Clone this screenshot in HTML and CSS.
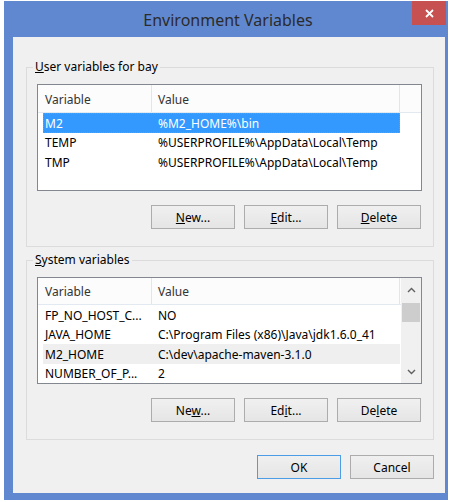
FILE: index.html
```html
<!DOCTYPE html>
<html lang="en">
<head>
<meta charset="utf-8">
<title>Environment Variables</title>
<link rel="stylesheet" href="styles.css">
</head>
<body>
<div class="window">
  <div class="titlebar">
    <span class="title">Environment Variables</span>
    <button class="close" aria-label="Close">
      <svg width="9" height="9" viewBox="0 0 9 9"><path d="M1 1 L8 8 M8 1 L1 8" stroke="#fff" stroke-width="1.8" fill="none"/></svg>
    </button>
  </div>
  <div class="client">
    <fieldset class="group">
      <legend><u>U</u>ser variables for bay</legend>
      <div class="list">
        <div class="list-body">
          <div class="list-head">
            <div class="col col-var">Variable</div>
            <div class="col col-val">Value</div>
          </div>
          <div class="rows">
            <div class="row selected"><span class="cell-var">M2</span><span class="cell-val">%M2_HOME%\bin</span></div>
            <div class="row"><span class="cell-var">TEMP</span><span class="cell-val">%USERPROFILE%\AppData\Local\Temp</span></div>
            <div class="row"><span class="cell-var">TMP</span><span class="cell-val">%USERPROFILE%\AppData\Local\Temp</span></div>
          </div>
        </div>
      </div>
      <div class="btns">
        <button class="btn"><u>N</u>ew...</button>
        <button class="btn"><u>E</u>dit...</button>
        <button class="btn"><u>D</u>elete</button>
      </div>
    </fieldset>

    <fieldset class="group group-sys">
      <legend><u>S</u>ystem variables</legend>
      <div class="list">
        <div class="list-body">
          <div class="list-head">
            <div class="col col-var">Variable</div>
            <div class="col col-val">Value</div>
          </div>
          <div class="rows">
            <div class="row"><span class="cell-var">FP_NO_HOST_C...</span><span class="cell-val">NO</span></div>
            <div class="row"><span class="cell-var">JAVA_HOME</span><span class="cell-val">C:\Program Files (x86)\Java\jdk1.6.0_41</span></div>
            <div class="row hover"><span class="cell-var">M2_HOME</span><span class="cell-val">C:\dev\apache-maven-3.1.0</span></div>
            <div class="row"><span class="cell-var">NUMBER_OF_P...</span><span class="cell-val">2</span></div>
          </div>
        </div>
        <div class="scrollbar">
          <div class="sb-arrow">
            <svg width="9" height="6" viewBox="0 0 9 6"><path d="M1 5 L4.5 1.5 L8 5" stroke="#606060" stroke-width="1.4" fill="none"/></svg>
          </div>
          <div class="sb-track"><div class="sb-thumb"></div></div>
          <div class="sb-arrow">
            <svg width="9" height="6" viewBox="0 0 9 6"><path d="M1 1 L4.5 4.5 L8 1" stroke="#606060" stroke-width="1.4" fill="none"/></svg>
          </div>
        </div>
      </div>
      <div class="btns">
        <button class="btn">Ne<u>w</u>...</button>
        <button class="btn">Ed<u>i</u>t...</button>
        <button class="btn">De<u>l</u>ete</button>
      </div>
    </fieldset>

    <div class="dialog-btns">
      <button class="btn btn-default">OK</button>
      <button class="btn">Cancel</button>
    </div>
  </div>
</div>
</body>
</html>
```

FILE: styles.css
```css
* { box-sizing: border-box; }

html, body {
  margin: 0;
  padding: 0;
  background: #fff;
}

body {
  font-family: "Noto Sans", "Open Sans", sans-serif;
  font-size: 12px;
  color: #000;
}

.window {
  width: 444px;
  height: 499px;
  margin: 1px 0 0 4px;
  background: #6088d0;
  display: flex;
  flex-direction: column;
}

.titlebar {
  height: 36px;
  display: grid;
  grid-template-areas: "bar";
}

.title {
  grid-area: bar;
  justify-self: center;
  align-self: start;
  padding: 7px 0 0 4px;
  font-size: 16px;
  line-height: 24px;
  color: #2b2b2b;
}

.close {
  grid-area: bar;
  justify-self: end;
  align-self: start;
  width: 34px;
  height: 24px;
  margin-right: 2px;
  padding: 0;
  border: none;
  background: #c75050;
  display: flex;
  align-items: center;
  justify-content: center;
}

.client {
  margin: 0 3px 7px 9px;
  height: 456px;
  background: #f0f0f0;
  display: flex;
  flex-direction: column;
  padding-top: 22px;
}

.group {
  width: 408px;
  margin: 0 0 0 13px;
  padding: 9px 0 17px 0;
  border: 1px solid #dcdcdc;
  min-inline-size: 0;
}

.group-sys {
  margin-top: 5px;
}

.group legend {
  margin-left: 6px;
  padding: 0 2px;
  line-height: 16px;
  font-size: 12px;
}

.list {
  height: 107px;
  margin: 0 11px 0 10px;
  border: 1px solid #828790;
  background: #fff;
  display: flex;
}

.list-body {
  flex: 1;
  display: flex;
  flex-direction: column;
}

.list-head {
  height: 28px;
  display: flex;
  background: #fcfcfc;
  border-bottom: 1px solid #e3e9f1;
  color: #333;
}

.col {
  display: flex;
  align-items: center;
  padding-top: 1px;
}

.col-var {
  width: 114px;
  padding-left: 7px;
  border-right: 1px solid #e5e5e5;
}

.col-val {
  width: 248px;
  padding-left: 6px;
  border-right: 1px solid #e5e5e5;
}

.rows {
  display: flex;
  flex-direction: column;
}

.row {
  width: 357px;
  height: 19.5px;
  margin-left: 5px;
  display: flex;
  align-items: center;
  white-space: nowrap;
  padding-top: 1px;
}

.cell-var {
  width: 109px;
  padding-left: 2px;
}

.cell-val {
  flex: 1;
  padding-left: 6px;
}

.row.selected {
  background: #3399ff;
  color: #fff;
  outline: 1px dotted #cc8a3a;
  outline-offset: -1px;
}

.row.hover {
  background: #efefef;
}

.scrollbar {
  width: 20px;
  background: #f0f0f0;
  display: flex;
  flex-direction: column;
}

.sb-arrow {
  height: 19px;
  display: flex;
  align-items: center;
  justify-content: center;
  margin-top: 2px;
}

.sb-arrow:last-child {
  margin-top: 0;
  margin-bottom: 2px;
}

.sb-track {
  flex: 1;
  padding: 4px 1px 0 1px;
}

.sb-thumb {
  height: 19px;
  background: #cdcdcd;
}

.btns {
  display: flex;
  justify-content: flex-end;
  gap: 9px;
  margin: 14px 12px 0 0;
}

.btn {
  width: 84px;
  height: 24px;
  padding: 0;
  border: 1px solid #acacac;
  background: linear-gradient(#f0f0f0, #e5e5e5);
  font-family: inherit;
  font-size: 12px;
  color: #000;
}

.btn-default {
  border-color: #4d9de6;
}

.dialog-btns {
  width: 408px;
  margin: 15px 0 0 13px;
  display: flex;
  justify-content: flex-end;
  gap: 9px;
}
```
